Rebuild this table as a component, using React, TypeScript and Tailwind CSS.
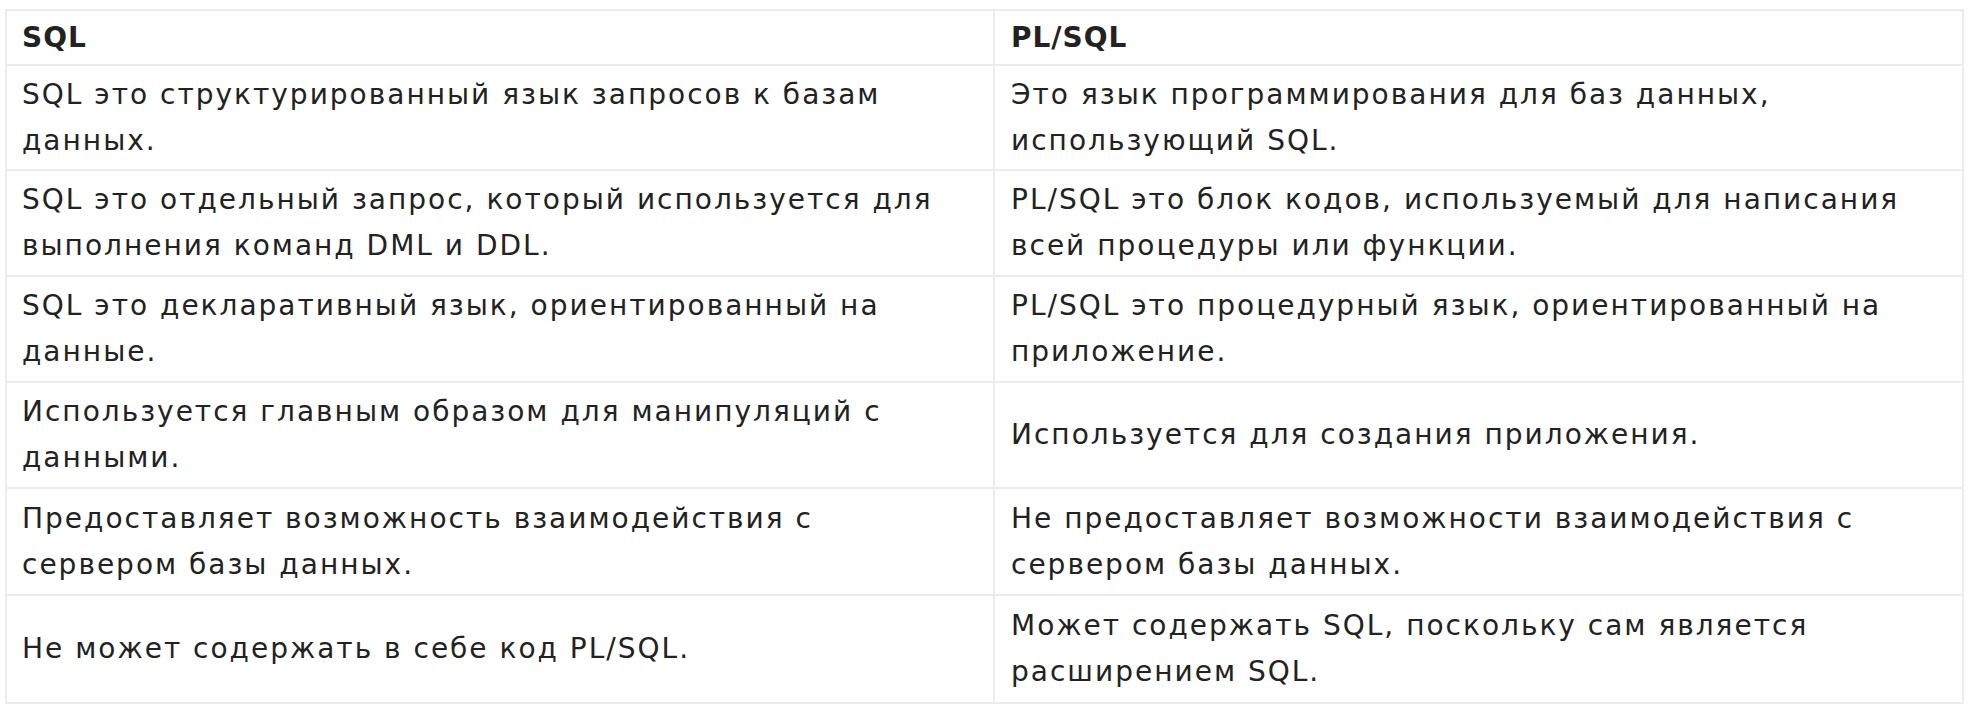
const rows: { left: string[]; right: string[]; h: string }[] = [
  {
    left: ["SQL это структурированный язык запросов к базам", "данных."],
    right: ["Это язык программирования для баз данных,", "использующий SQL."],
    h: "h-[105px]",
  },
  {
    left: ["SQL это отдельный запрос, который используется для", "выполнения команд DML и DDL."],
    right: ["PL/SQL это блок кодов, используемый для написания", "всей процедуры или функции."],
    h: "h-[106px]",
  },
  {
    left: ["SQL это декларативный язык, ориентированный на", "данные."],
    right: ["PL/SQL это процедурный язык, ориентированный на", "приложение."],
    h: "h-[106px]",
  },
  {
    left: ["Используется главным образом для манипуляций с", "данными."],
    right: ["Используется для создания приложения."],
    h: "h-[106px]",
  },
  {
    left: ["Предоставляет возможность взаимодействия с", "сервером базы данных."],
    right: ["Не предоставляет возможности взаимодействия с", "сервером базы данных."],
    h: "h-[107px]",
  },
  {
    left: ["Не может содержать в себе код PL/SQL."],
    right: ["Может содержать SQL, поскольку сам является", "расширением SQL."],
    h: "h-[106px]",
  },
];

function Cell({ lines, first }: { lines: string[]; first?: boolean }) {
  return (
    <div
      className={
        first
          ? "w-[988px] shrink-0 flex items-center pl-[15px] border-r-2 border-[#ececec]"
          : "flex-1 flex items-center pl-[16px]"
      }
    >
      <p className="leading-[46px]">
        {lines.map((l, i) => (
          <span key={i} className="block whitespace-nowrap">
            {l}
          </span>
        ))}
      </p>
    </div>
  );
}

export default function App() {
  return (
    <div
      className="w-[1970px] h-[710px] bg-white pt-[9px] pl-[5px] text-[#222222] text-[28px] tracking-[2px]"
      style={{ fontFamily: '"DejaVu Sans", "Noto Sans", sans-serif' }}
    >
      <div className="w-[1959px] border-2 border-[#ececec]">
        {/* Header */}
        <div className="flex h-[55px] border-b-2 border-[#ececec] font-bold tracking-[1px]">
          <div className="w-[988px] shrink-0 flex items-center pl-[15px] border-r-2 border-[#ececec]">
            SQL
          </div>
          <div className="flex-1 flex items-center pl-[16px]">PL/SQL</div>
        </div>

        {rows.map((r, i) => (
          <div
            key={i}
            className={`flex ${r.h} ${i < rows.length - 1 ? "border-b-2 border-[#ececec]" : ""}`}
          >
            <Cell lines={r.left} first />
            <Cell lines={r.right} />
          </div>
        ))}
      </div>
    </div>
  );
}
